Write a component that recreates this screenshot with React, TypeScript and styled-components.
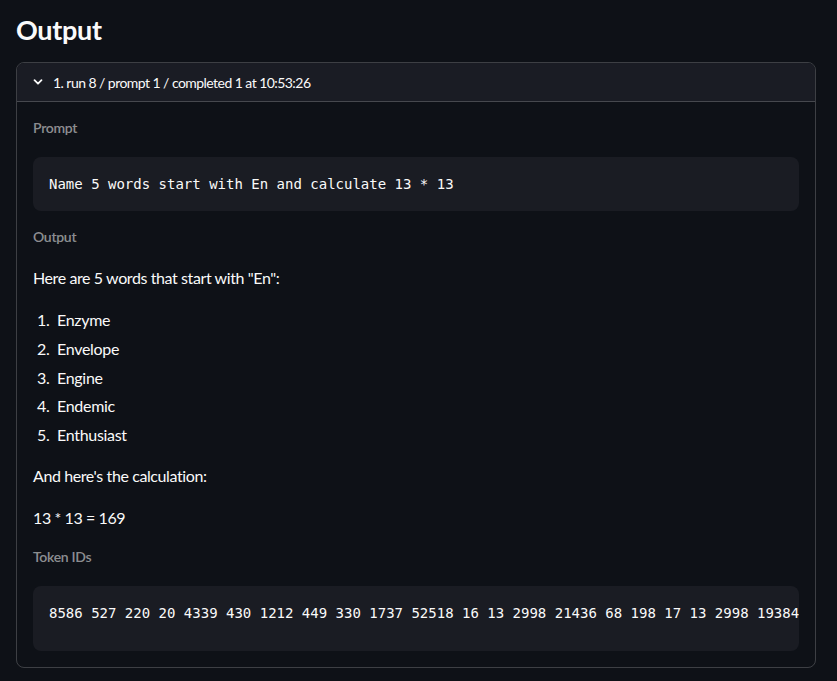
import styled, { createGlobalStyle } from 'styled-components';

const GlobalStyle = createGlobalStyle`
  html, body {
    margin: 0;
    padding: 0;
    background: #0e1117;
  }
  body {
    color: #fafafa;
    font-family: Lato, "Noto Sans", sans-serif;
    -webkit-font-smoothing: antialiased;
  }
`;

const Page = styled.main`
  padding: 13px 16px 16px;
`;

const Title = styled.h1`
  margin: 0 0 15px;
  font-size: 27px;
  line-height: 34px;
  font-weight: 700;
  letter-spacing: -0.3px;
  color: #fafafa;
`;

const Expander = styled.section`
  width: 800px;
  box-sizing: border-box;
  border: 1px solid rgba(250, 250, 250, 0.2);
  border-radius: 8px;
  overflow: hidden;
`;

const ExpanderHeader = styled.div`
  display: flex;
  align-items: center;
  gap: 10px;
  height: 38px;
  padding: 0 16px;
  background: #1a1c24;
  border-bottom: 1px solid rgba(250, 250, 250, 0.2);
  font-size: 14px;
  letter-spacing: -0.55px;
  color: #fafafa;

  svg {
    flex: none;
  }
`;

const ExpanderBody = styled.div`
  padding: 16px;
`;

const Label = styled.div<{ $gap?: number }>`
  margin-top: ${({ $gap }) => $gap ?? 0}px;
  font-size: 14px;
  line-height: 20px;
  font-weight: 600;
  letter-spacing: -0.3px;
  color: rgba(250, 250, 250, 0.55);
`;

const CodeBlock = styled.pre<{ $tall?: boolean }>`
  margin: 19px 0 0;
  padding: 16px 16px ${({ $tall }) => ($tall ? 27 : 16)}px;
  background: #1a1c23;
  border-radius: 8px;
  overflow: hidden;
  white-space: pre;
  font-family: "DejaVu Sans Mono", "Liberation Mono", monospace;
  font-size: 14px;
  line-height: 22px;
  color: #fafafa;
`;

const Paragraph = styled.p<{ $gap: number }>`
  margin: ${({ $gap }) => $gap}px 0 0;
  font-size: 16px;
  line-height: 24px;
  letter-spacing: -0.4px;
`;

const List = styled.ol`
  margin: 18px 0 0;
  padding-left: 4px;
  list-style: none;
  counter-reset: item;
  font-size: 16px;
  line-height: 24px;
  letter-spacing: -0.3px;

  li {
    display: flex;
    counter-increment: item;
  }

  li::before {
    content: counter(item) ".";
    width: 20px;
    flex: none;
  }

  li + li {
    margin-top: 4.75px;
  }
`;

const Chevron = () => (
  <svg width="10" height="10" viewBox="0 0 10 10" fill="none">
    <path d="M1.5 3.2 L5 6.7 L8.5 3.2" stroke="#fafafa" strokeWidth="1.8" strokeLinecap="round" strokeLinejoin="round" />
  </svg>
);

const words = ['Enzyme', 'Envelope', 'Engine', 'Endemic', 'Enthusiast'];

const tokenIds = [
  8586, 527, 220, 20, 4339, 430, 1212, 449, 330, 1737, 52518, 16, 13, 2998, 21436, 68, 198, 17, 13, 2998, 19384,
];

export default function App() {
  return (
    <Page>
      <GlobalStyle />
      <Title>Output</Title>
      <Expander>
        <ExpanderHeader>
          <Chevron />
          <span>1. run 8 / prompt 1 / completed 1 at 10:53:26</span>
        </ExpanderHeader>
        <ExpanderBody>
          <Label>Prompt</Label>
          <CodeBlock>Name 5 words start with En and calculate 13 * 13</CodeBlock>
          <Label $gap={16}>Output</Label>
          <Paragraph $gap={19}>Here are 5 words that start with "En":</Paragraph>
          <List>
            {words.map((w) => (
              <li key={w}>{w}</li>
            ))}
          </List>
          <Paragraph $gap={17}>And here's the calculation:</Paragraph>
          <Paragraph $gap={18}>13 * 13 = 169</Paragraph>
          <Label $gap={17}>Token IDs</Label>
          <CodeBlock $tall>{tokenIds.join(' ')}</CodeBlock>
        </ExpanderBody>
      </Expander>
    </Page>
  );
}
